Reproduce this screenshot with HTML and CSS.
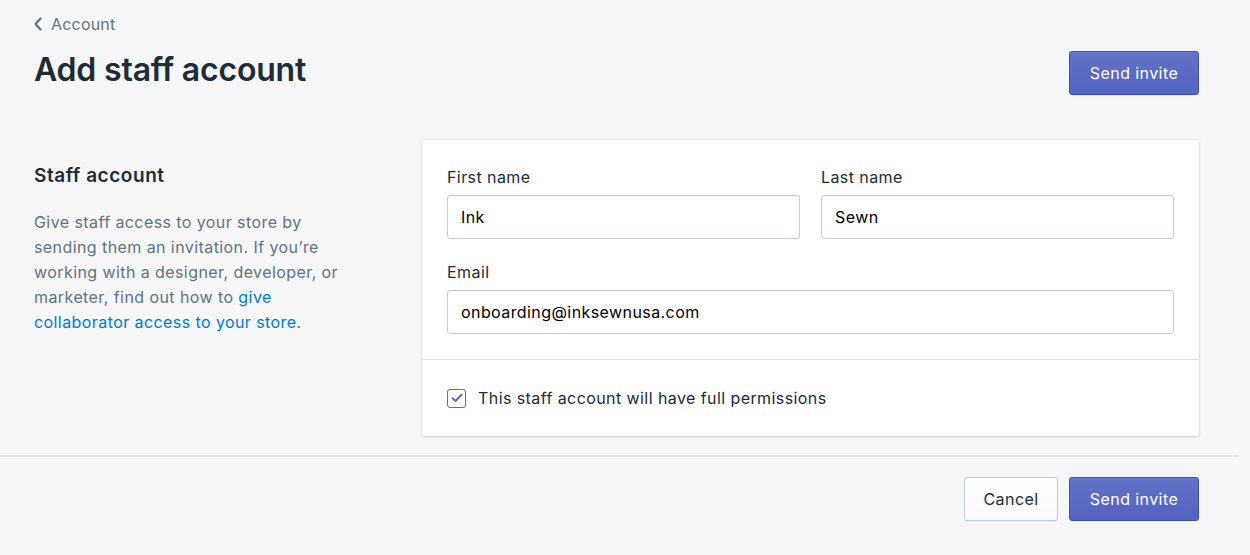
FILE: index.html
```html
<!DOCTYPE html>
<html lang="en">
<head>
<meta charset="utf-8">
<title>Add staff account</title>
<link rel="stylesheet" href="styles.css">
</head>
<body>
<div class="page">
  <a class="breadcrumb" href="#">
    <svg class="chev" width="10" height="14" viewBox="0 0 10 14"><path d="M7.5 1.5 L2.5 7 L7.5 12.5" fill="none" stroke="#637381" stroke-width="2.2" stroke-linecap="round" stroke-linejoin="round"/></svg>
    <span>Account</span>
  </a>
  <div class="header">
    <h1 class="title">Add staff account</h1>
    <button class="btn btn-primary">Send invite</button>
  </div>
  <div class="section">
    <div class="annotation">
      <h2 class="ann-title">Staff account</h2>
      <p class="ann-desc">Give staff access to your store by sending them an invitation. If you’re working with a designer, developer, or marketer, find out how to <a href="#" class="link">give collaborator access to your store</a>.</p>
    </div>
    <div class="card">
      <div class="card-section">
        <div class="row">
          <label class="field">
            <span class="label">First name</span>
            <input class="input" type="text" value="Ink">
          </label>
          <label class="field">
            <span class="label">Last name</span>
            <input class="input" type="text" value="Sewn">
          </label>
        </div>
        <label class="field email">
          <span class="label">Email</span>
          <input class="input" type="text" value="onboarding@inksewnusa.com">
        </label>
      </div>
      <div class="card-section check-section">
        <label class="check">
          <span class="box"><svg width="12" height="10" viewBox="0 0 12 10"><path d="M1.5 5.2 L4.5 8 L10.5 1.8" fill="none" stroke="#5c6ac4" stroke-width="2" stroke-linecap="round" stroke-linejoin="round"/></svg></span>
          <span>This staff account will have full permissions</span>
        </label>
      </div>
    </div>
  </div>
</div>
<div class="footer">
  <div class="footer-actions">
    <button class="btn btn-secondary">Cancel</button>
    <button class="btn btn-primary">Send invite</button>
  </div>
</div>
</body>
</html>
```

FILE: styles.css
```css
* { box-sizing: border-box; }
html, body { margin: 0; padding: 0; }
body {
  background: #f4f6f8;
  font-family: Inter, "Liberation Sans", sans-serif;
  color: #212b36;
  font-size: 16px;
  letter-spacing: 0.42px;
  width: 1250px;
  height: 555px;
  overflow: hidden;
}
.page { padding: 14px 51px 0 34px; }
.breadcrumb {
  display: flex;
  align-items: center;
  gap: 8px;
  height: 20px;
  color: #637381;
  text-decoration: none;
  font-size: 16px;
  letter-spacing: 0.2px;
}
.chev { margin-left: -1px; }
.header {
  display: flex;
  justify-content: space-between;
  align-items: flex-start;
  margin-top: 16px;
}
.title {
  margin: 0;
  font-size: 32px;
  line-height: 40px;
  font-weight: 600;
  letter-spacing: -0.2px;
  color: #212b36;
}
.header .btn { margin-top: 1px; }
.btn {
  font-family: inherit;
  font-size: 16px;
  letter-spacing: 0.42px;
  height: 44px;
  padding: 0 18px;
  border-radius: 3px;
  cursor: pointer;
}
.btn-primary {
  color: #fff;
  background: linear-gradient(180deg, #6371c7, #5563c1);
  border: 1px solid #3f4eae;
  box-shadow: inset 0 1px 0 0 #6f7bcb, 0 1px 0 0 rgba(22,29,37,.05);
  width: 130px;
}
.btn-secondary {
  color: #212b36;
  background: linear-gradient(180deg, #fff, #f9fafb);
  border: 1px solid #c4cdd5;
  box-shadow: 0 1px 0 0 rgba(22,29,37,.05);
  width: 94px;
}
.section {
  display: grid;
  grid-template-columns: 310px 1fr;
  column-gap: 78px;
  margin-top: 45px;
}
.annotation { padding-top: 24px; }
.ann-title {
  margin: 0;
  font-size: 19px;
  line-height: 24px;
  font-weight: 600;
  letter-spacing: 0.55px;
  color: #212b36;
}
.ann-desc {
  margin: 22px 0 0;
  font-size: 16px;
  line-height: 25px;
  color: #637381;
}
.link { color: #007ace; text-decoration: none; }
.card {
  background: #fff;
  border-radius: 3px;
  box-shadow: 0 0 0 1px rgba(63,63,68,.05), 0 1px 3px 0 rgba(63,63,68,.15);
}
.card-section { padding: 27px 25px 25px; }
.card-section + .card-section { border-top: 1px solid #dfe3e8; }
.row {
  display: grid;
  grid-template-columns: 1fr 1fr;
  column-gap: 21px;
}
.field { display: flex; flex-direction: column; }
.label {
  font-size: 16px;
  line-height: 20px;
  margin-bottom: 8px;
  color: #212b36;
}
.email { margin-top: 23px; }
.input {
  height: 44px;
  border: 1px solid #c4cdd5;
  border-radius: 3px;
  box-shadow: inset 0 1px 0 0 rgba(99,115,129,.05);
  padding: 0 13px;
  font-family: inherit;
  font-size: 16px;
  letter-spacing: 0.42px;
  color: #000;
  background: #fff;
  outline: none;
}
.check-section { padding-top: 28px; padding-bottom: 28px; }
.check {
  display: flex;
  align-items: center;
  gap: 12px;
  font-size: 16px;
  line-height: 20px;
  color: #212b36;
}
.box {
  width: 19px;
  height: 19px;
  border: 1.5px solid #5c6ac4;
  border-radius: 3px;
  display: flex;
  align-items: center;
  justify-content: center;
  background: #fff;
}
.footer {
  margin-top: 19px;
  margin-right: 11px;
  border-top: 2px solid #e4e7eb;
  padding: 20px 40px 0 0;
}
.footer-actions {
  display: flex;
  justify-content: flex-end;
  gap: 11px;
}
```
